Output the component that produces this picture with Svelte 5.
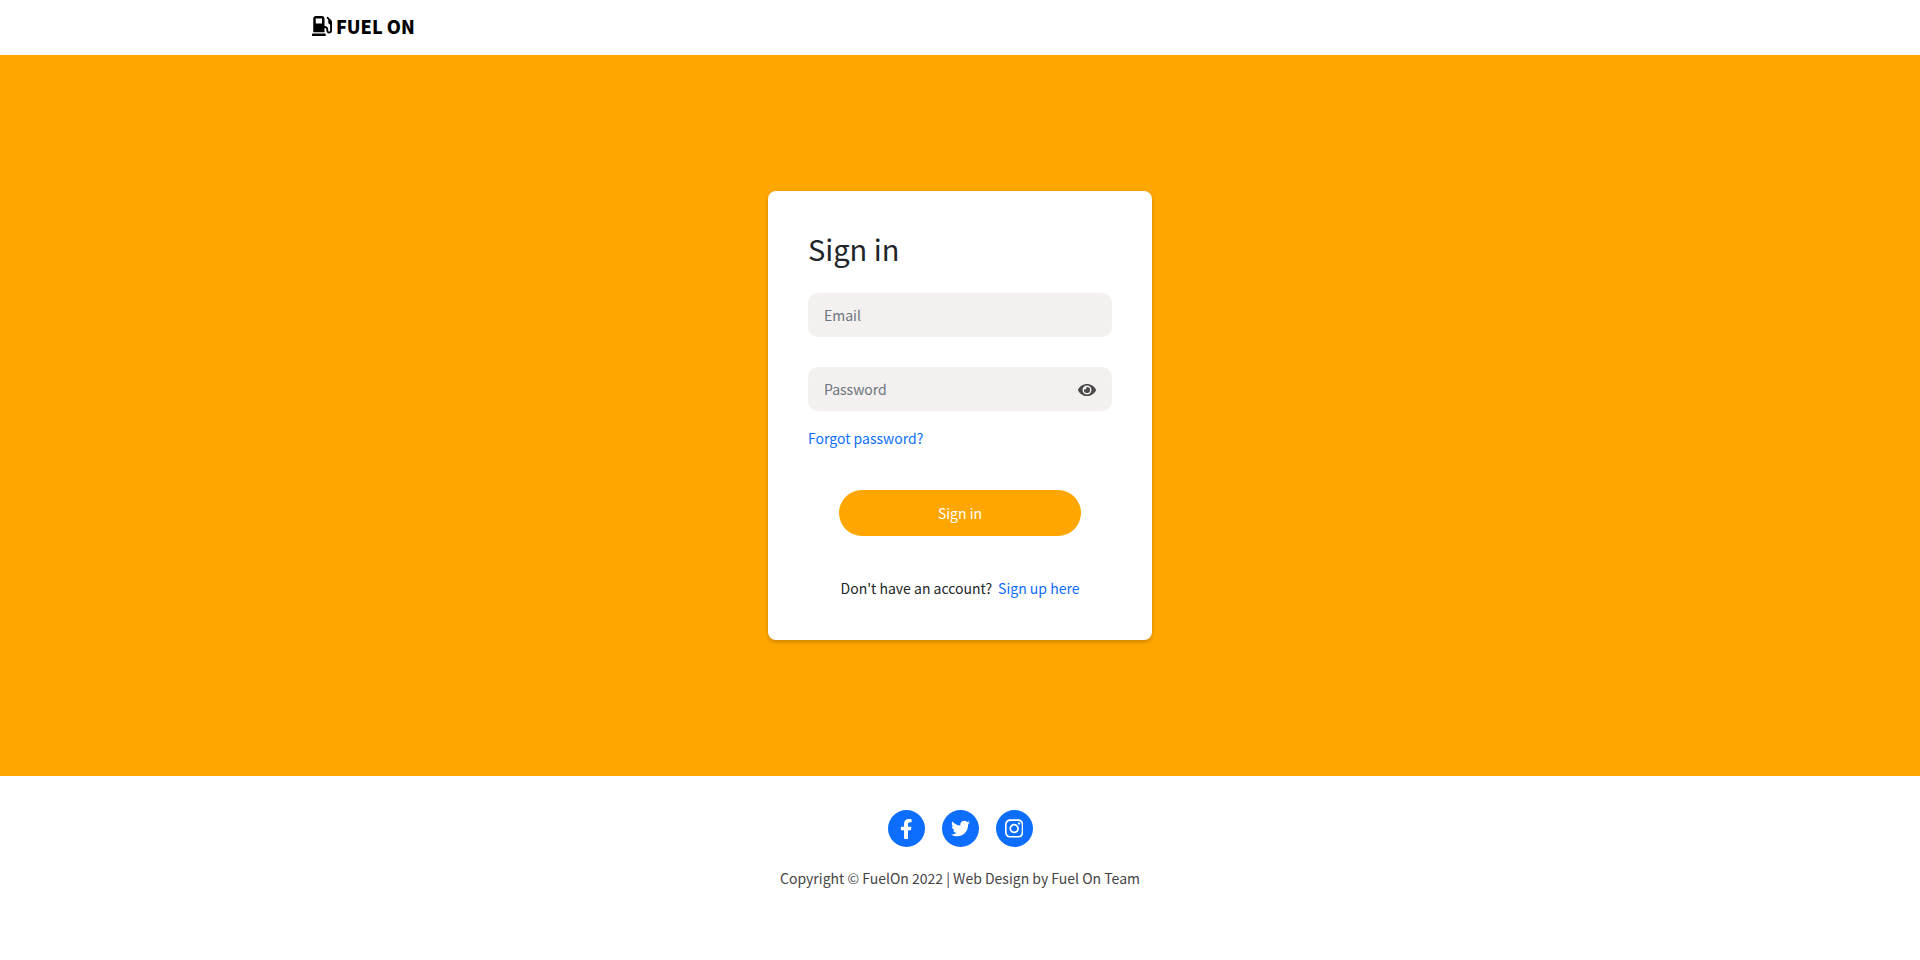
<script>
  let email = $state('');
  let password = $state('');
  let visible = $state(false);

  const socials = [
    {
      name: 'Facebook',
      size: 20,
      box: '0 0 320 512',
      d: 'M279.14 288l14.22-92.66h-88.91v-60.13c0-25.35 12.42-50.06 52.24-50.06h40.42V6.26S260.43 0 225.36 0c-73.22 0-121.08 44.38-121.08 124.72v70.62H22.89V288h81.39v224h100.17V288z'
    },
    {
      name: 'Twitter',
      size: 19,
      box: '0 0 512 512',
      d: 'M459.37 151.716c.325 4.548.325 9.097.325 13.645 0 138.72-105.583 298.558-298.558 298.558-59.452 0-114.68-17.219-161.137-47.106 8.447.974 16.568 1.299 25.34 1.299 49.055 0 94.213-16.568 130.274-44.832-46.132-.975-84.792-31.188-98.112-72.772 6.498.974 12.995 1.624 19.818 1.624 9.421 0 18.843-1.3 27.614-3.573-48.081-9.747-84.143-51.98-84.143-102.985v-1.299c13.969 7.797 30.214 12.67 47.431 13.319-28.264-18.843-46.781-51.005-46.781-87.391 0-19.492 5.197-37.36 14.294-52.954 51.655 63.675 129.3 105.258 216.365 109.807-1.624-7.797-2.599-15.918-2.599-24.04 0-57.828 46.782-104.934 104.934-104.934 30.213 0 57.502 12.67 76.67 33.137 23.715-4.548 46.456-13.32 66.599-25.34-7.798 24.366-24.366 44.833-46.132 57.827 21.117-2.273 41.584-8.122 60.426-16.243-14.292 20.791-32.161 39.308-52.628 54.253z'
    },
    {
      name: 'Instagram',
      size: 21,
      box: '0 0 448 512',
      d: 'M224.1 141c-63.6 0-114.9 51.3-114.9 114.9s51.3 114.9 114.9 114.9S339 319.5 339 255.9 287.7 141 224.1 141zm0 189.6c-41.1 0-74.7-33.5-74.7-74.7s33.5-74.7 74.7-74.7 74.7 33.5 74.7 74.7-33.6 74.7-74.7 74.7zm146.4-194.3c0 14.9-12 26.8-26.8 26.8-14.9 0-26.8-12-26.8-26.8s12-26.8 26.8-26.8 26.8 12 26.8 26.8zm76.1 27.2c-1.7-35.9-9.9-67.7-36.2-93.9-26.2-26.2-58-34.4-93.9-36.2-37-2.1-147.9-2.1-184.9 0-35.8 1.7-67.6 9.9-93.9 36.1s-34.4 58-36.2 93.9c-2.1 37-2.1 147.9 0 184.9 1.7 35.9 9.9 67.7 36.2 93.9s58 34.4 93.9 36.2c37 2.1 147.9 2.1 184.9 0 35.9-1.7 67.7-9.9 93.9-36.2 26.2-26.2 34.4-58 36.2-93.9 2.1-37 2.1-147.8 0-184.8zM398.8 388c-7.8 19.6-22.9 34.7-42.6 42.6-29.5 11.7-99.5 9-132.1 9s-102.7 2.6-132.1-9c-19.6-7.8-34.7-22.9-42.6-42.6-11.7-29.5-9-99.5-9-132.1s-2.6-102.7 9-132.1c7.8-19.6 22.9-34.7 42.6-42.6 29.5-11.7 99.5-9 132.1-9s102.7-2.6 132.1 9c19.6 7.8 34.7 22.9 42.6 42.6 11.7 29.5 9 99.5 9 132.1s2.7 102.7-9 132.1z'
    }
  ];
</script>

<div class="page">
  <header>
    <div class="container">
      <a class="brand" href="/">
        <svg viewBox="0 0 512 512" aria-hidden="true">
          <path d="M336 448H16c-8.8 0-16 7.2-16 16v32c0 8.8 7.2 16 16 16h320c8.8 0 16-7.2 16-16v-32c0-8.8-7.2-16-16-16zm157.2-340.7l-81-81c-6.2-6.2-16.4-6.2-22.6 0l-11.3 11.3c-6.2 6.2-6.2 16.4 0 22.6L416 97.9V160c0 28.1 20.9 51.3 48 55.2V376c0 13.2-10.8 24-24 24s-24-10.8-24-24v-32c0-48.6-39.4-88-88-88h-8V64c0-35.3-28.7-64-64-64H96C60.7 0 32 28.7 32 64v352h288V304h8c22.1 0 40 17.9 40 40v27.8c0 37.7 27 72 64.5 75.9 43 4.3 79.5-29.5 79.5-71.7V152.6c0-17-6.8-33.3-18.8-45.3zM256 192H96V64h160v128z" />
        </svg>
        <span>FUEL ON</span>
      </a>
    </div>
  </header>

  <main>
    <form class="card" onsubmit={(e) => e.preventDefault()}>
      <h1>Sign in</h1>
      <div class="field">
        <input type="email" placeholder="Email" aria-label="Email" bind:value={email} />
      </div>
      <div class="field">
        <input
          type={visible ? 'text' : 'password'}
          placeholder="Password"
          aria-label="Password"
          value={password}
          oninput={(e) => (password = e.currentTarget.value)}
        />
        <button class="eye" type="button" aria-label="Show password" onclick={() => (visible = !visible)}>
          <svg viewBox="0 0 576 512" aria-hidden="true">
            <path d="M572.52 241.4C518.29 135.59 410.93 64 288 64S57.68 135.64 3.48 241.41a32.35 32.35 0 0 0 0 29.19C57.71 376.41 165.07 448 288 448s230.32-71.64 284.52-177.41a32.35 32.35 0 0 0 0-29.19zM288 400a144 144 0 1 1 144-144 143.93 143.93 0 0 1-144 144zm0-240a95.31 95.31 0 0 0-25.31 3.79 47.85 47.85 0 0 1-66.9 66.9A95.78 95.78 0 1 0 288 160z" />
          </svg>
        </button>
      </div>
      <a class="forgot" href="#forgot">Forgot password?</a>
      <button class="submit" type="submit">Sign in</button>
      <p class="signup"><span>Don't have an account?</span> <a href="#signup">Sign up here</a></p>
    </form>
  </main>

  <footer>
    <nav aria-label="Social links">
      {#each socials as s}
        <a href={'#' + s.name.toLowerCase()} aria-label={s.name}>
          <svg viewBox={s.box} height={s.size} aria-hidden="true"><path d={s.d} /></svg>
        </a>
      {/each}
    </nav>
    <p>Copyright © FuelOn 2022 | Web Design by Fuel On Team</p>
  </footer>
</div>

<style>
  :global(body) {
    margin: 0;
    background: #fff;
  }
  .page {
    display: flex;
    flex-direction: column;
    min-height: 100vh;
    font: 14px/24px 'Noto Sans CJK JP', 'Noto Sans', sans-serif;
    color: #212529;
  }
  a {
    color: #0d6efd;
    text-decoration: none;
  }
  p {
    margin: 0;
  }
  header {
    padding: 12px 0 15px;
  }
  .container {
    display: flex;
    max-width: 1296px;
    margin: 0 auto;
  }
  .brand {
    display: flex;
    align-items: center;
    gap: 4px;
    font-size: 18px;
    line-height: 28px;
    font-weight: 900;
    color: #000;
  }
  .brand svg {
    width: 20px;
    height: 20px;
  }
  main {
    flex: 1;
    display: flex;
    align-items: center;
    justify-content: center;
    padding: 48px 16px;
    background: #ffa600;
  }
  .card {
    box-sizing: border-box;
    width: 100%;
    max-width: 384px;
    display: flex;
    flex-direction: column;
    padding: 40px;
    border-radius: 8px;
    background: #fff;
    box-shadow: 0 2px 4px rgba(0, 0, 0, 0.2);
  }
  h1 {
    margin: 0 0 28px;
    font-size: 29px;
    line-height: 34px;
    font-weight: 400;
  }
  .field {
    position: relative;
    margin-bottom: 30px;
  }
  input {
    box-sizing: border-box;
    display: block;
    width: 100%;
    height: 44px;
    padding: 0 16px;
    border: 0;
    border-radius: 10px;
    background: #f3f0ef;
    font: inherit;
    color: inherit;
  }
  input::placeholder {
    color: #6c757d;
    opacity: 1;
  }
  .field + .field {
    margin-bottom: 15px;
  }
  .field + .field input {
    padding-right: 48px;
  }
  .eye {
    position: absolute;
    top: 1px;
    right: 16px;
    bottom: 0;
    display: flex;
    align-items: center;
    padding: 0;
    border: 0;
    background: none;
    color: #4a4a4a;
    cursor: pointer;
  }
  .eye svg {
    width: 18px;
    height: 16px;
  }
  svg {
    display: block;
    fill: currentColor;
  }
  .forgot {
    align-self: flex-start;
  }
  .submit {
    width: 242px;
    max-width: 100%;
    height: 46px;
    margin: 40px auto;
    border: 0;
    border-radius: 23px;
    background: #ffa600;
    font: inherit;
    color: #fff;
    cursor: pointer;
  }
  .signup {
    display: flex;
    flex-wrap: wrap;
    justify-content: center;
    column-gap: 6px;
  }
  footer {
    display: flex;
    flex-direction: column;
    align-items: center;
    gap: 19px;
    padding: 34px 16px 70px;
    color: #444;
    text-align: center;
  }
  nav {
    display: flex;
    gap: 17px;
  }
  nav a {
    display: flex;
    align-items: center;
    justify-content: center;
    width: 37px;
    height: 37px;
    border-radius: 50%;
    background: #0d6efd;
    color: #fff;
  }
</style>
